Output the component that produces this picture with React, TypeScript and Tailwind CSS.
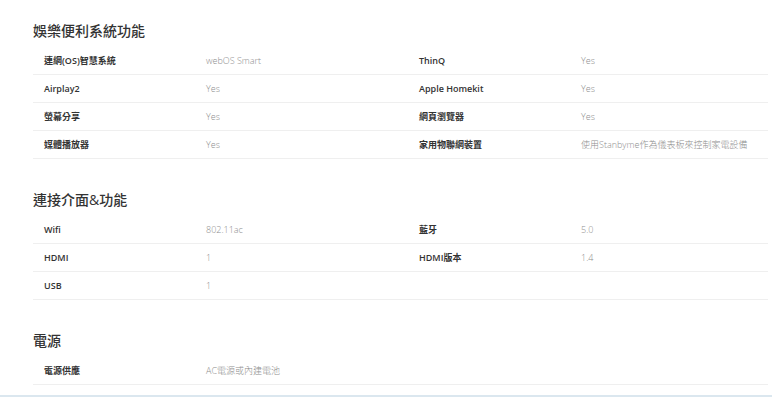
import React from 'react';

type Spec = [string, string];

interface Section {
  title: string;
  rows: [Spec, Spec | null][];
}

const sections: Section[] = [
  {
    title: '娛樂便利系統功能',
    rows: [
      [['連網(OS)智慧系統', 'webOS Smart'], ['ThinQ', 'Yes']],
      [['Airplay2', 'Yes'], ['Apple Homekit', 'Yes']],
      [['螢幕分享', 'Yes'], ['網頁瀏覽器', 'Yes']],
      [['媒體播放器', 'Yes'], ['家用物聯網裝置', '使用Stanbyme作為儀表板來控制家電設備']],
    ],
  },
  {
    title: '連接介面&功能',
    rows: [
      [['Wifi', '802.11ac'], ['藍牙', '5.0']],
      [['HDMI', '1'], ['HDMI版本', '1.4']],
      [['USB', '1'], null],
    ],
  },
  {
    title: '電源',
    rows: [[['電源供應', 'AC電源或內建電池'], null]],
  },
];

const Cell = ({ spec }: { spec: Spec | null }) => (
  <>
    <div className="w-[162px] shrink-0 text-[9px] font-semibold text-[#333]">{spec?.[0]}</div>
    <div className="w-[213px] shrink-0 text-[9px] font-light text-[#8e8e8e] whitespace-nowrap">{spec?.[1]}</div>
  </>
);

export default function App() {
  return (
    <div
      className="w-[772px] h-[397px] bg-white overflow-hidden flex flex-col"
      style={{ fontFamily: '"Open Sans", "Noto Sans CJK TC", sans-serif' }}
    >
      <div className="flex flex-col pl-[33px] pr-[4px] pt-[21px]">
        {sections.map((section, i) => (
          <section key={section.title} className={i > 0 ? 'mt-[31px]' : ''}>
            <h2 className="h-[20px] leading-[20px] text-[14px] font-medium text-[#333] mb-[6px]">
              {section.title}
            </h2>
            <div className="flex flex-col">
              {section.rows.map(([left, right], j) => (
                <div key={j} className="h-[28px] flex items-center pl-[11px] border-b border-[#efefef]">
                  <Cell spec={left} />
                  <Cell spec={right} />
                </div>
              ))}
            </div>
          </section>
        ))}
      </div>
      <div className="mt-auto h-[2px] bg-[#dbe7ef]" />
    </div>
  );
}
